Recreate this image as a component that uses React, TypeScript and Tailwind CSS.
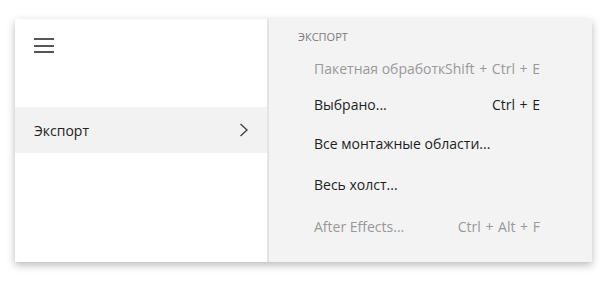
const items = [
  { label: "Пакетная обработка...", shortcut: "Shift + Ctrl + E", disabled: true, h: "h-[36px]" },
  { label: "Выбрано...", shortcut: "Ctrl + E", disabled: false, h: "h-[37px]" },
  { label: "Все монтажные области...", shortcut: "", disabled: false, h: "h-[40px]" },
  { label: "Весь холст...", shortcut: "", disabled: false, h: "h-[42px]" },
  { label: "After Effects...", shortcut: "Ctrl + Alt + F", disabled: true, h: "h-[42px]" },
];

function Hamburger() {
  return (
    <svg width="20" height="16" viewBox="0 0 20 16" className="text-[#555]">
      <rect x="0" y="0" width="20" height="2" fill="currentColor" />
      <rect x="0" y="7" width="20" height="2" fill="currentColor" />
      <rect x="0" y="13" width="20" height="2" fill="currentColor" />
    </svg>
  );
}

function Chevron() {
  return (
    <svg width="10" height="14" viewBox="0 0 10 14" className="text-[#444]">
      <path d="M1.5 1 L8 7 L1.5 13" fill="none" stroke="currentColor" strokeWidth="1.4" />
    </svg>
  );
}

export default function App() {
  return (
    <div className="w-[608px] h-[284px] bg-white pt-[19px] pl-[15px] font-['Open_Sans',sans-serif]">
      <div className="flex w-[577px] h-[243px] shadow-[0_3px_8px_rgba(0,0,0,0.28)]">
        <div className="w-[252px] bg-white flex flex-col">
          <div className="h-[88px] pl-[19px] pt-[19px]">
            <Hamburger />
          </div>
          <div className="h-[46px] bg-[#f2f2f2] flex items-center justify-between pl-[19px] pr-[18px] text-[14px] text-[#222]">
            <span>Экспорт</span>
            <Chevron />
          </div>
        </div>
        <div className="w-[2px] bg-[#e4e4e4]" />
        <div className="flex-1 bg-[#f3f3f3] pl-[29px] pt-[6px]">
          <div className="text-[11px] text-[#7a7a7a] h-[25px] flex items-center">ЭКСПОРТ</div>
          <div className="pl-[16px] w-[242px]">
            {items.map((it) => (
              <div
                key={it.label}
                className={`${it.h} flex items-center text-[14px] ${it.disabled ? "text-[#999]" : "text-[#1e1e1e]"}`}
              >
                <span className="flex-1 min-w-0 overflow-hidden whitespace-nowrap">{it.label}</span>
                {it.shortcut && (
                  <span className="shrink-0 whitespace-nowrap [word-spacing:1px]">{it.shortcut}</span>
                )}
              </div>
            ))}
          </div>
        </div>
      </div>
    </div>
  );
}
